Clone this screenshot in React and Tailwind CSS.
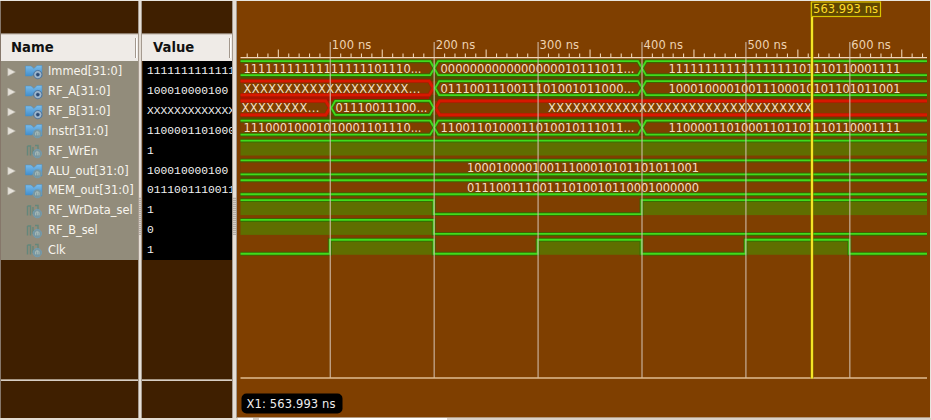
import React from 'react';

const signals = [
  { name: 'Immed[31:0]', value: '1111111111111', bus: true, kind: 'dot' },
  { name: 'RF_A[31:0]', value: '100010000100', bus: true, kind: 'dot' },
  { name: 'RF_B[31:0]', value: 'XXXXXXXXXXXXX', bus: true, kind: 'dot' },
  { name: 'Instr[31:0]', value: '1100001101000', bus: true, kind: 'gate' },
  { name: 'RF_WrEn', value: '1', kind: 'gate' },
  { name: 'ALU_out[31:0]', value: '100010000100', bus: true, kind: 'gate' },
  { name: 'MEM_out[31:0]', value: '0111001110011', bus: true, kind: 'gate' },
  { name: 'RF_WrData_sel', value: '1', kind: 'gate' },
  { name: 'RF_B_sel', value: '0', kind: 'gate' },
  { name: 'Clk', value: '1', kind: 'gate' },
];

const GREEN = '#3fdc1c';
const RED = '#d81800';
const START = 3.5;
const END = 690;
const GRID = [93.3, 197.2, 301.1, 405, 508.9, 612.8];
const top = (row) => 61.2 + row * 19.84;

function SignalIcon({ bus, kind }) {
  return (
    <svg width="18" height="16" viewBox="0 0 18 16" className="shrink-0">
      <defs>
        <linearGradient id="busBlue" x1="0" y1="0" x2="0" y2="1">
          <stop offset="0" stopColor="#7dbdea" />
          <stop offset="1" stopColor="#3b8acb" />
        </linearGradient>
      </defs>
      {bus ? (
        <path d="M0.5 2H6L9 4.5L12 1.5H17V13H11L8.5 10.5L6.5 12H0.5Z" fill="url(#busBlue)" stroke="#4a8dbd" strokeWidth="0.5" />
      ) : (
        <path d="M2.5 3V12.5M2.5 3H5.5V12.5M8 4V11M10 2.5H13V9" fill="none" stroke="#64877b" strokeWidth="1.4" />
      )}
      {kind === 'dot' ? (
        <g>
          <circle cx="12.8" cy="10.6" r="4.2" fill="#7f9dbb" stroke="#4b6f96" strokeWidth="0.8" />
          <circle cx="12.8" cy="10.6" r="2.9" fill="none" stroke="#bccbd6" strokeWidth="0.7" />
          <circle cx="12.8" cy="10.6" r="1.7" fill="#2d4a75" />
        </g>
      ) : (
        <g>
          <circle cx="12.3" cy="10.6" r="4.2" fill="#7896a0" stroke="#6f9db4" strokeWidth="0.9" />
          <path d="M10.6 12.4V9.8Q10.6 8.8 12.3 8.8Q14 8.8 14 9.8V12.4M12.3 8.8V12.4" fill="none" stroke="#b7c5bd" strokeWidth="0.8" />
        </g>
      )}
    </svg>
  );
}

function Line({ d, color = GREEN }) {
  return (
    <g fill="none">
      <path d={d} stroke={color === GREEN ? '#267000' : '#b01400'} strokeOpacity="0.7" strokeWidth="4" />
      <path d={d} stroke={color} strokeWidth={color === GREEN ? 1.8 : 2.6} />
    </g>
  );
}

function Bus({ row, from, to, color = GREEN, openLeft, openRight }) {
  const t = top(row);
  const m = t + 7;
  const b = t + 14;
  let d;
  if (openLeft && openRight) d = `M${from} ${t}H${to}M${from} ${b}H${to}`;
  else if (openLeft) d = `M${from} ${t}H${to - 4}L${to} ${m}L${to - 4} ${b}H${from}`;
  else if (openRight) d = `M${to} ${t}H${from + 4}L${from} ${m}L${from + 4} ${b}H${to}`;
  else d = `M${from} ${m}L${from + 4} ${t}H${to - 4}L${to} ${m}L${to - 4} ${b}H${from + 4}Z`;
  return <Line d={d} color={color} />;
}

function High({ row, from, to }) {
  return <rect x={from} y={top(row)} width={to - from} height="15" fill="#5f6e00" />;
}

function Bits({ row, x, w, children }) {
  return (
    <text x={x} y={top(row) + 11.6} textLength={w} fill="#f5dfc3" fontSize="11.5">
      {children}
    </text>
  );
}

function Waves() {
  const [a, b, c, d, e, f] = GRID;
  const hi = (r) => top(r);
  const lo = (r) => top(r) + 14;
  return (
    <svg width="693" height="417" viewBox="0 0 693 417" className="block font-['DejaVu_Sans',sans-serif]">
      <rect x={START} y="60" width={END - START} height="76" fill="#5c4700" />
      <rect x={START} y="159" width={END - START} height="37" fill="#5c4700" />
      {[0, 1, 2, 3, 5, 6].map((r) => (
        <rect key={r} x={START} y={top(r)} width={END - START} height="14" fill="#7f3f00" />
      ))}
      <High row={4} from={START} to={END} />
      <High row={7} from={START} to={b} />
      <High row={7} from={d} to={END} />
      <High row={8} from={START} to={b} />
      <High row={9} from={a} to={b} />
      <High row={9} from={c} to={d} />
      <High row={9} from={e} to={f} />

      {[0, 3].map((r) => (
        <g key={r}>
          <Bus row={r} from={START} to={b} openLeft />
          <Bus row={r} from={b} to={d} />
          <Bus row={r} from={d} to={END} openRight />
        </g>
      ))}
      <rect x={START} y={top(1) + 14} width={b - START - 5} height="6" fill="#a81400" />
      <Bus row={1} from={START} to={b - 1} color={RED} openLeft />
      <Bus row={1} from={b + 1} to={d} />
      <Bus row={1} from={d} to={END} openRight />
      <Bus row={2} from={START} to={a - 0.5} color={RED} openLeft />
      <Bus row={2} from={b + 1.5} to={END} color={RED} openRight />
      <Bus row={2} from={a + 1} to={b - 0.5} />
      <Line d={`M${START} ${hi(4)}H${END}`} />
      <Bus row={5} from={START} to={END} openLeft openRight />
      <Bus row={6} from={START} to={END} openLeft openRight />
      <Line d={`M${START} ${hi(7)}H${b - 0.5}V${lo(7)}H${d - 0.5}V${hi(7)}H${END}`} />
      <Line d={`M${START} ${hi(8)}H${b - 0.5}V${lo(8)}H${END}`} />
      <Line
        d={`M${START} ${lo(9)}H${a - 0.5}V${hi(9)}H${b - 0.5}V${lo(9)}H${c - 0.5}V${hi(9)}H${d - 0.5}V${lo(9)}H${e - 0.5}V${hi(9)}H${f - 0.5}V${lo(9)}H${END}`}
      />

      <Bits row={0} x={6.5} w={178}>11111111111111111101110...</Bits>
      <Bits row={0} x={203.5} w={194}>0000000000000000010111011...</Bits>
      <Bits row={0} x={431.5} w={232}>11111111111111111101110110001111</Bits>
      <Bits row={1} x={6.5} w={177}>XXXXXXXXXXXXXXXXXXXX...</Bits>
      <Bits row={1} x={203.5} w={194}>0111001110011101001011000...</Bits>
      <Bits row={1} x={431.5} w={232}>10001000010011100010101101011001</Bits>
      <Bits row={2} x={4.5} w={78}>XXXXXXXX...</Bits>
      <Bits row={2} x={98.5} w={92}>01110011100...</Bits>
      <Bits row={2} x={311} w={264}>XXXXXXXXXXXXXXXXXXXXXXXXXXXXXXXX</Bits>
      <Bits row={3} x={6.5} w={178}>11100010001010001101110...</Bits>
      <Bits row={3} x={203.5} w={194}>1100110100011010010111011...</Bits>
      <Bits row={3} x={431.5} w={232}>11000011010001101101110110001111</Bits>
      <Bits row={5} x={230} w={232}>10001000010011100010101101011001</Bits>
      <Bits row={6} x={230} w={232}>01110011100111010010110001000000</Bits>

      {GRID.map((x, i) => (
        <g key={x}>
          <path d={`M${x} 42V378`} stroke="#d2bfae" strokeOpacity="0.75" strokeWidth="1.4" />
          <text x={x + 1.5} y="49" textLength="39.5" fontSize="11.5" fill="#eed3b2">{`${i + 1}00 ns`}</text>
        </g>
      ))}
      {Array.from({ length: 66 }, (_, i) => i + 2)
        .filter((i) => i % 10 !== 0)
        .map((i) => {
          const x = a + (i - 10) * 10.39;
          return x > START && x < END ? (
            <path key={i} d={`M${x} ${i % 5 === 0 ? 49.5 : 53.5}V58`} stroke="#edd2b2" strokeWidth="1.1" />
          ) : null;
        })}
      <path d={`M${START} 57.6H${END}`} stroke="#efd6b8" strokeWidth="1.2" />
      <path d={`M${START} 378H${END}`} stroke="#dfbd91" strokeWidth="1.4" />

      <path d="M575 2V378.5" stroke="#948400" strokeWidth="3" />
      <path d="M575 2V378.5" stroke="#fff02a" strokeWidth="1.8" />
      <rect x="574.5" y="2" width="69" height="14.5" fill="#604700" stroke="#d9c400" strokeWidth="1.2" />
      <text x="576" y="13" textLength="65" fontSize="11.5" fill="#ffdc28">563.993 ns</text>
      <rect x="4.5" y="393.5" width="101" height="20" rx="5" fill="#000" />
      <text x="9.5" y="407.5" textLength="89" fontSize="11.5" fill="#eeeeee">X1: 563.993 ns</text>
    </svg>
  );
}

function Splitter({ className }) {
  return (
    <div className={`flex shrink-0 flex-col border-x border-[#a59a8f] bg-[#e5ded6] ${className}`}>
      <div className="mt-[196px] h-[38px] bg-[repeating-linear-gradient(#d8d1c9_0_1px,#b5aea6_1px_2px)]" />
    </div>
  );
}

function Header({ children, className }) {
  return (
    <div className={`flex h-[26px] shrink-0 items-center justify-between bg-[#efebe7] pr-px text-[13.2px] font-bold text-[#111] ${className}`}>
      <span>{children}</span>
      <span className="h-[20px] w-[2px] border-l border-[#a3988d] bg-white" />
    </div>
  );
}

export default function App() {
  return (
    <div className="flex h-[420px] w-[931px] flex-col overflow-hidden bg-[#e9e5df] font-['DejaVu_Sans',sans-serif]">
      <div className="flex h-[418px] pt-px">
        <div className="flex w-[138px] shrink-0 flex-col overflow-hidden border-l border-[#86776a] bg-[#3f1f00]">
          <div className="h-[32px] shrink-0" />
          <div className="h-[2px] shrink-0 border-t border-[#8c7c6c] bg-[#d7cec5]" />
          <Header className="pl-[10px]">Name</Header>
          <div className="flex h-[199px] shrink-0 flex-col bg-[#928c7b] pt-px">
            {signals.map((s) => (
              <div key={s.name} className="flex h-[19.84px] shrink-0 items-center whitespace-nowrap text-[11.4px] text-[#f8f5ee]">
                <span className="flex w-[24px] shrink-0 pl-[6px]">
                  {s.bus && (
                    <svg width="9" height="10" viewBox="0 0 9 10">
                      <path d="M0.8 1L8.4 5L0.8 9Z" fill="#e6e2da" stroke="#b9b3a7" strokeWidth="0.6" />
                    </svg>
                  )}
                </span>
                <SignalIcon bus={s.bus} kind={s.kind} />
                <span className="pl-[5px]">{s.name}</span>
              </div>
            ))}
          </div>
          <div className="h-[119px] shrink-0" />
          <div className="h-[2px] shrink-0 border-t border-[#a69581] bg-[#d7cec5]" />
        </div>
        <Splitter className="w-[4px]" />
        <div className="flex w-[90px] shrink-0 flex-col overflow-hidden bg-[#3f1f00]">
          <div className="h-[32px] shrink-0" />
          <div className="h-[2px] shrink-0 border-t border-[#8c7c6c] bg-[#d7cec5]" />
          <Header className="pl-[11px]">Value</Header>
          <div className="ml-px flex h-[199px] shrink-0 flex-col overflow-hidden bg-black pt-px">
            {signals.map((s) => (
              <div
                key={s.name}
                className="flex h-[19.84px] shrink-0 items-center whitespace-nowrap pl-[4px] font-['Liberation_Mono',monospace] text-[11.3px] text-[#f2f2f2]"
              >
                {s.value}
              </div>
            ))}
          </div>
          <div className="h-[119px] shrink-0" />
          <div className="h-[2px] shrink-0 border-t border-[#a69581] bg-[#d7cec5]" />
        </div>
        <Splitter className="w-[5px]" />
        <div className="-mt-px h-[418px] w-[693px] shrink-0 border-b border-[#b39a80] bg-[#7f3f00]">
          <div className="h-px bg-[#e9e5df]" />
          <div className="-mt-px">
            <Waves />
          </div>
        </div>
      </div>
      <div className="flex h-[2px]">
        <div className="w-[238px] bg-[#e4ddd3]" />
        <div className="w-[15px] bg-white" />
        <div className="w-[6px] bg-[#d5cdc4]" />
        <div className="w-[188px] bg-white" />
        <div className="flex-1 bg-[#d9d1c8]" />
      </div>
    </div>
  );
}
